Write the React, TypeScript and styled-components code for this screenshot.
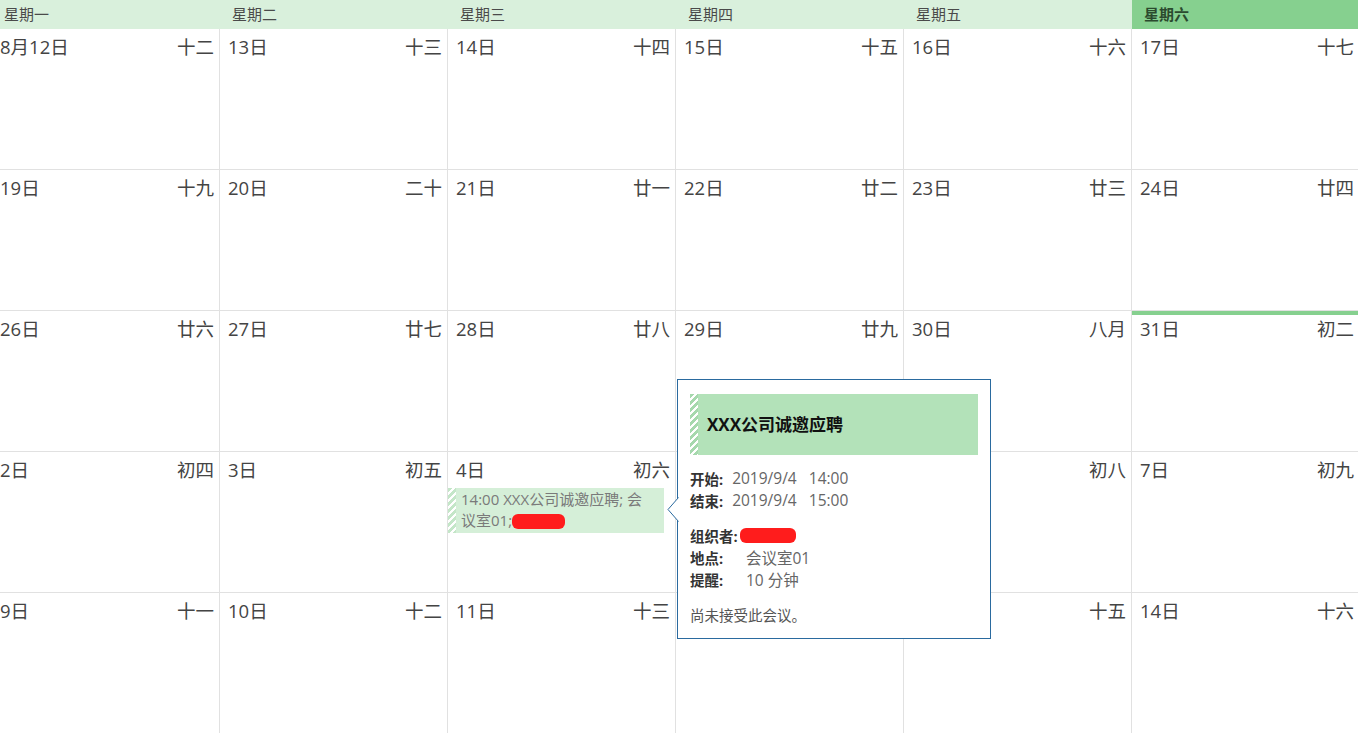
import React from "react";
import styled, { createGlobalStyle } from "styled-components";

const GlobalStyle = createGlobalStyle`
  html, body {
    margin: 0;
    padding: 0;
    background: #fff;
  }
  body {
    font-family: "Open Sans", "Noto Sans CJK SC", "Noto Sans", sans-serif;
    color: #444;
  }
`;

type Day = { date: string; lunar: string; today?: boolean };

const weekdays = ["星期一", "星期二", "星期三", "星期四", "星期五", "星期六"];

const weeks: Day[][] = [
  [
    { date: "8月12日", lunar: "十二" },
    { date: "13日", lunar: "十三" },
    { date: "14日", lunar: "十四" },
    { date: "15日", lunar: "十五" },
    { date: "16日", lunar: "十六" },
    { date: "17日", lunar: "十七" },
  ],
  [
    { date: "19日", lunar: "十九" },
    { date: "20日", lunar: "二十" },
    { date: "21日", lunar: "廿一" },
    { date: "22日", lunar: "廿二" },
    { date: "23日", lunar: "廿三" },
    { date: "24日", lunar: "廿四" },
  ],
  [
    { date: "26日", lunar: "廿六" },
    { date: "27日", lunar: "廿七" },
    { date: "28日", lunar: "廿八" },
    { date: "29日", lunar: "廿九" },
    { date: "30日", lunar: "八月" },
    { date: "31日", lunar: "初二", today: true },
  ],
  [
    { date: "2日", lunar: "初四" },
    { date: "3日", lunar: "初五" },
    { date: "4日", lunar: "初六" },
    { date: "5日", lunar: "初七" },
    { date: "6日", lunar: "初八" },
    { date: "7日", lunar: "初九" },
  ],
  [
    { date: "9日", lunar: "十一" },
    { date: "10日", lunar: "十二" },
    { date: "11日", lunar: "十三" },
    { date: "12日", lunar: "十四" },
    { date: "13日", lunar: "十五" },
    { date: "14日", lunar: "十六" },
  ],
];

const Viewport = styled.div`
  position: relative;
  width: 1358px;
  height: 733px;
  overflow: hidden;
`;

// the calendar is scrolled a few pixels to the left
const Calendar = styled.div`
  width: 1368px;
  margin-left: -8px;
`;

const HeaderRow = styled.div`
  display: grid;
  grid-template-columns: repeat(6, 228px);
  height: 29px;
`;

const HeaderCell = styled.div<{ $active?: boolean }>`
  display: flex;
  align-items: center;
  padding-left: 12px;
  padding-bottom: 2px;
  font-size: 15px;
  background: ${(p) => (p.$active ? "#86d08f" : "#d9f0dc")};
  color: ${(p) => (p.$active ? "#2b4a2e" : "#4a4a4a")};
  font-weight: ${(p) => (p.$active ? 700 : 400)};
`;

const Grid = styled.div`
  display: grid;
  grid-template-columns: repeat(6, 228px);
  grid-auto-rows: 141px;
`;

const Cell = styled.div<{ $today?: boolean }>`
  display: flex;
  flex-direction: column;
  box-sizing: border-box;
  border-right: 1px solid #e1e1e1;
  border-bottom: 1px solid #e1e1e1;
  padding: 6px 5px 0 8px;
  box-shadow: ${(p) => (p.$today ? "inset 0 4px 0 #86d08f" : "none")};
`;

const CellHead = styled.div`
  display: flex;
  justify-content: space-between;
  font-size: 18.5px;
  line-height: 24px;
  color: #444;
`;

const hatch = (base: string) =>
  `repeating-linear-gradient(135deg, ${base} 0 3px, #ffffff 3px 5px)`;

const EventBlock = styled.div`
  display: flex;
  margin: 6px 6px 0 -8px;
  min-height: 45px;
  background: #d5efd8;
`;

const Hatch = styled.div<{ $base: string }>`
  flex: 0 0 8px;
  background: ${(p) => hatch(p.$base)};
`;

const EventText = styled.div`
  padding: 1px 10px 0 5px;
  font-size: 15px;
  line-height: 21px;
  color: #7a7a7a;
`;

const Redact = styled.span<{ $w: number }>`
  display: inline-block;
  width: ${(p) => p.$w}px;
  height: 15px;
  border-radius: 6px;
  background: #ff1c1c;
  vertical-align: -3px;
`;

const Popup = styled.div`
  position: absolute;
  left: 677px;
  top: 379px;
  width: 314px;
  height: 260px;
  box-sizing: border-box;
  border: 1px solid #2a6a9f;
  background: #fff;
  padding: 14px 12px 0 12px;
  display: flex;
  flex-direction: column;
`;

const Arrow = styled.svg`
  position: absolute;
  left: -11px;
  top: 117px;
`;

const PopupTitleBar = styled.div`
  display: flex;
  height: 61px;
  background: #b3e2b9;
`;

const PopupTitle = styled.div`
  display: flex;
  align-items: center;
  padding: 0 0 3px 9px;
  font-size: 17px;
  font-weight: 700;
  color: #111;
`;

const InfoGroup = styled.div<{ $top: number }>`
  display: flex;
  flex-direction: column;
  margin-top: ${(p) => p.$top}px;
`;

const InfoRow = styled.div`
  display: flex;
  align-items: center;
  height: 22px;
`;

const Label = styled.span<{ $w?: number }>`
  flex: none;
  font-size: 14.5px;
  font-weight: 700;
  color: #333;
  width: ${(p) => (p.$w ? `${p.$w}px` : "auto")};
  padding-right: ${(p) => (p.$w ? 0 : 9)}px;
`;

const Value = styled.span`
  font-size: 15.5px;
  color: #666;
  white-space: pre;
`;

const Note = styled.div`
  margin-top: 14px;
  font-size: 14.5px;
  color: #555;
`;

export default function App() {
  return (
    <>
      <GlobalStyle />
      <Viewport>
        <Calendar>
          <HeaderRow>
            {weekdays.map((w, i) => (
              <HeaderCell key={w} $active={i === 5}>
                {w}
              </HeaderCell>
            ))}
          </HeaderRow>
          <Grid>
            {weeks.map((week, wi) =>
              week.map((d, di) => (
                <Cell key={`${wi}-${di}`} $today={d.today}>
                  <CellHead>
                    <span>{d.date}</span>
                    <span>{d.lunar}</span>
                  </CellHead>
                  {wi === 3 && di === 2 && (
                    <EventBlock>
                      <Hatch $base="#c4e6c8" />
                      <EventText>
                        14:00 XXX公司诚邀应聘; 会议室01;
                        <Redact $w={53} />
                      </EventText>
                    </EventBlock>
                  )}
                </Cell>
              ))
            )}
          </Grid>
        </Calendar>

        <Popup>
          <Arrow width="12" height="25" viewBox="0 0 12 25">
            <polygon points="12,0 1,12.5 12,25" fill="#fff" />
            <polyline points="11.5,0.5 1,12.5 11.5,24.5" fill="none" stroke="#2a6a9f" strokeWidth="1" />
          </Arrow>
          <PopupTitleBar>
            <Hatch $base="#a6d8ad" />
            <PopupTitle>XXX公司诚邀应聘</PopupTitle>
          </PopupTitleBar>
          <InfoGroup $top={12}>
            <InfoRow>
              <Label>开始:</Label>
              <Value>2019/9/4   14:00</Value>
            </InfoRow>
            <InfoRow>
              <Label>结束:</Label>
              <Value>2019/9/4   15:00</Value>
            </InfoRow>
          </InfoGroup>
          <InfoGroup $top={13}>
            <InfoRow>
              <Label $w={50}>组织者:</Label>
              <Redact $w={56} />
            </InfoRow>
            <InfoRow>
              <Label $w={56}>地点:</Label>
              <Value>会议室01</Value>
            </InfoRow>
            <InfoRow>
              <Label $w={56}>提醒:</Label>
              <Value>10 分钟</Value>
            </InfoRow>
          </InfoGroup>
          <Note>尚未接受此会议。</Note>
        </Popup>
      </Viewport>
    </>
  );
}
